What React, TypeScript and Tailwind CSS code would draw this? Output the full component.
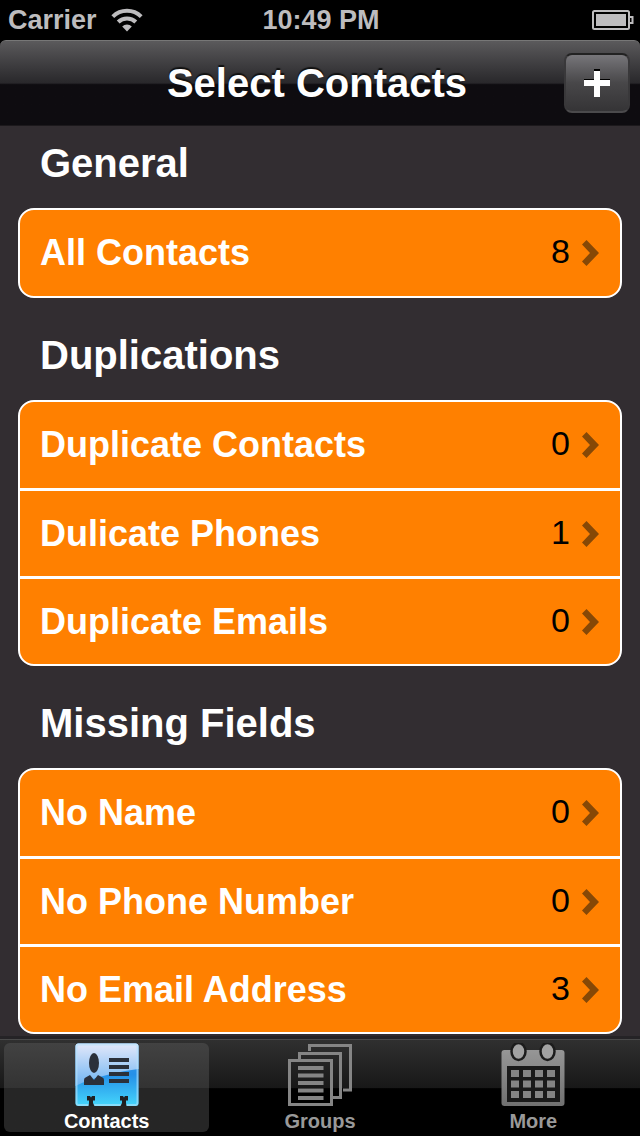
import { useState } from "react";
import clsx from "clsx";

interface ContactFilter {
  label: string;
  count: number;
}

interface FilterSection {
  title: string;
  filters: ContactFilter[];
}

const SECTIONS: FilterSection[] = [
  { title: "General", filters: [{ label: "All Contacts", count: 8 }] },
  {
    title: "Duplications",
    filters: [
      { label: "Duplicate Contacts", count: 0 },
      { label: "Dulicate Phones", count: 1 },
      { label: "Duplicate Emails", count: 0 },
    ],
  },
  {
    title: "Missing Fields",
    filters: [
      { label: "No Name", count: 0 },
      { label: "No Phone Number", count: 0 },
      { label: "No Email Address", count: 3 },
    ],
  },
];

const TABS = [
  { id: "contacts", label: "Contacts", Icon: ContactsIcon },
  { id: "groups", label: "Groups", Icon: GroupsIcon },
  { id: "more", label: "More", Icon: MoreIcon },
];

function WifiIcon() {
  return (
    <svg className="h-6 w-8" viewBox="0 0 32 24" fill="none" stroke="#bdbcbe" strokeWidth="4" aria-hidden="true">
      <path d="M1.8 8.6a20.3 20.3 0 0 1 28.4 0" />
      <path d="M7.2 14a12.6 12.6 0 0 1 17.6 0" />
      <path d="M16 23.4l-4.8-4.8a6.8 6.8 0 0 1 9.6 0z" fill="#bdbcbe" stroke="none" />
    </svg>
  );
}

function BatteryIcon() {
  return (
    <svg className="h-5 w-[42px]" viewBox="0 0 42 20" aria-hidden="true">
      <rect x="1" y="1" width="36" height="18" rx="1.5" fill="none" stroke="#bdbcbe" strokeWidth="2" />
      <rect x="4" y="4" width="30" height="12" fill="#bdbcbe" />
      <path d="M38 7h2.5v6H38" fill="none" stroke="#bdbcbe" strokeWidth="2" />
    </svg>
  );
}

function ContactsIcon() {
  return (
    <svg className="h-[63px] w-16" viewBox="0 0 64 63" aria-hidden="true">
      <defs>
        <linearGradient id="card" x1="0" y1="0" x2="0" y2="1">
          <stop offset="0" stopColor="#3f9bea" />
          <stop offset="0.5" stopColor="#2590e8" />
          <stop offset="1" stopColor="#45d6fb" />
        </linearGradient>
        <linearGradient id="gloss" x1="0" y1="0" x2="0" y2="1">
          <stop offset="0" stopColor="#e3e8fa" />
          <stop offset="1" stopColor="#6db4f2" />
        </linearGradient>
      </defs>
      <rect x="0.5" y="0.5" width="63" height="62.5" rx="3" fill="url(#card)" />
      <path d="M3.500.5h57a3 3 0 0 1 3 3V26C46 28 18 34 .5 43V3.500a3 3 0 0 1 3-3z" fill="url(#gloss)" />
      <rect x="1.5" y="1.5" width="61" height="60.5" rx="2" fill="none" stroke="#b4e2fc" strokeOpacity="0.6" strokeWidth="2" />
      <g fill="#2b303a">
        <ellipse cx="19" cy="20" rx="5" ry="10" />
        <path d="M9 42v-5q0-2 2-2.700l4-2.300 4 5 4-5 4 2.300q2 .7 2 2.700v5z" />
        <path d="M34 15h20v4H34zM34 22h20v4H34zM34 29h20v4H34zM34 36h20v4H34z" />
      </g>
      <path
        d="M12 53h3l1 1.500 1-1.500h3v4.500h-2V60l1.500 3h-6l.5-3v-2.500h-2zM45 53h3l1 1.500 1-1.500h3v4.500h-2V60l.5 3h-6l1.500-3v-2.500h-2z"
        fill="#202022"
      />
    </svg>
  );
}

function GroupsIcon() {
  return (
    <svg className="h-[63px] w-16" viewBox="0 0 64 63" fill="none" stroke="#858585" strokeWidth="3" aria-hidden="true">
      <path d="M21.500 8V2.500h41V47H55" />
      <path d="M11.500 16V10.500h41V54.500H45" />
      <rect x="1.5" y="17.5" width="42" height="44" />
      <path d="M10 25h25.500M10 32.500h25.500M10 40h25.500M10 47.500h25.500M10 55h25.500" strokeWidth="4" />
    </svg>
  );
}

function MoreIcon() {
  return (
    <svg className="h-[63px] w-16" viewBox="0 0 64 63" aria-hidden="true">
      <defs>
        <linearGradient id="calendar" x1="0" y1="0" x2="0" y2="1">
          <stop offset="0" stopColor="#969696" />
          <stop offset="1" stopColor="#707070" />
        </linearGradient>
      </defs>
      <rect x="0.5" y="7" width="63" height="56" rx="3" fill="url(#calendar)" />
      <path d="M6 23h53v36H6z" fill="#1a1a1a" />
      <g fill="#a2a2a2" stroke="#1c1c1c" strokeWidth="2.5">
        <ellipse cx="17.5" cy="8.500" rx="7" ry="8.500" />
        <ellipse cx="46.5" cy="8.500" rx="7" ry="8.500" />
      </g>
      <path
        d="M10 27h8v7h-8zM22 27h8v7h-8zM34 27h8v7h-8zM46 27h8v7h-8zM10 37.500h8v7h-8zM22 37.500h8v7h-8zM34 37.500h8v7h-8zM46 37.500h8v7h-8zM10 48h8v7h-8zM22 48h8v7h-8zM34 48h8v7h-8zM46 48h8v7h-8z"
        fill="#858585"
      />
    </svg>
  );
}

function StatusBar() {
  return (
    <div className="grid h-10 grid-cols-[1fr_auto_1fr] items-center bg-black pl-2 pr-1.5 text-[27px] leading-10 font-bold text-[#bdbcbe]">
      <div className="flex items-center gap-3.5">
        <span>Carrier</span>
        <WifiIcon />
      </div>
      <time>10:49 PM</time>
      <div className="flex justify-end">
        <BatteryIcon />
      </div>
    </div>
  );
}

function FilterRow({ label, count }: ContactFilter) {
  return (
    <button type="button" className="flex size-full items-center pl-5 pr-[21px] text-left">
      <span className="flex-1 text-4xl font-bold text-white">{label}</span>
      <span className="pb-1 text-[34px] leading-10 text-black">{count}</span>
      <svg className="ml-3 h-[26px] w-[17px]" viewBox="0 0 17 26" aria-hidden="true">
        <path d="M4.500 0L17 13 4.500 26 0 21.500 8 13 0 4.500z" fill="#864806" />
      </svg>
    </button>
  );
}

export default function App() {
  const [activeTab, setActiveTab] = useState("contacts");

  return (
    <div className="flex min-h-screen flex-col bg-[#322d31] font-['Liberation_Sans',Arial,sans-serif]">
      <StatusBar />
      <div className="bg-black">
        <header className="grid h-[86px] grid-cols-[1fr_auto_1fr] items-center rounded-t-md border-t border-b border-t-[#777] border-b-[#1c191c] bg-linear-to-b from-[#5b5a5c] from-0% via-[#29282b] via-50% to-[#0e0c10] to-52% pl-1 pr-2.5">
          <span />
          <h1 className="text-[40px] leading-12 font-bold text-white [text-shadow:0_-2px_1px_#111]">Select Contacts</h1>
          <button
            type="button"
            aria-label="Add contact"
            className="flex h-[60px] w-[66px] items-center justify-center justify-self-end rounded-lg border-2 border-t-[#222] border-r-[#39383a] border-b-[#4b4a4c] border-l-[#39383a] bg-linear-to-b from-[#77767a] via-[#484749] via-50% to-[#353436]"
          >
            <svg className="size-7" viewBox="0 0 28 28" aria-hidden="true">
              <path d="M11 0h6v10h10v7H17v10h-6V17H1v-7h10z" fill="#000" />
              <path d="M11 2h6v9h10v6H17v11h-6V17H1v-6h10z" fill="#fff" />
            </svg>
          </button>
        </header>
      </div>

      <main className="flex flex-1 flex-col gap-[33px] px-[18px] pt-[13px] pb-0.5">
        {SECTIONS.map((section) => (
          <section key={section.title}>
            <h2 className="mb-[21px] pl-[22px] text-[40px] leading-12 font-bold text-white">{section.title}</h2>
            <ul className="overflow-hidden rounded-2xl border-2 border-white bg-[#ff8000]">
              {section.filters.map((filter) => (
                <li
                  key={filter.label}
                  className="h-[88px] border-t-3 border-white first:h-[86px] first:border-t-0"
                >
                  <FilterRow {...filter} />
                </li>
              ))}
            </ul>
          </section>
        ))}
      </main>

      <nav className="sticky bottom-0 border-t-3 border-[#252326] bg-black">
        <ul className="grid grid-cols-3 border-t border-[#4a4a4a] bg-linear-to-b from-[#303030] from-0% via-[#181818] via-50% to-black to-51% pt-[3px] pb-1">
          {TABS.map(({ id, label, Icon }) => (
            <li key={id} className="px-1">
              <button
                type="button"
                aria-pressed={activeTab === id}
                onClick={() => setActiveTab(id)}
                className={clsx(
                  "flex w-full flex-col items-center gap-1 rounded-md text-xl leading-[22px] font-bold",
                  activeTab === id
                    ? "bg-linear-to-b from-[#424242] from-0% via-[#333] via-50% to-[#262626] to-51% text-white"
                    : "text-[#999]"
                )}
              >
                <Icon />
                {label}
              </button>
            </li>
          ))}
        </ul>
      </nav>
    </div>
  );
}
